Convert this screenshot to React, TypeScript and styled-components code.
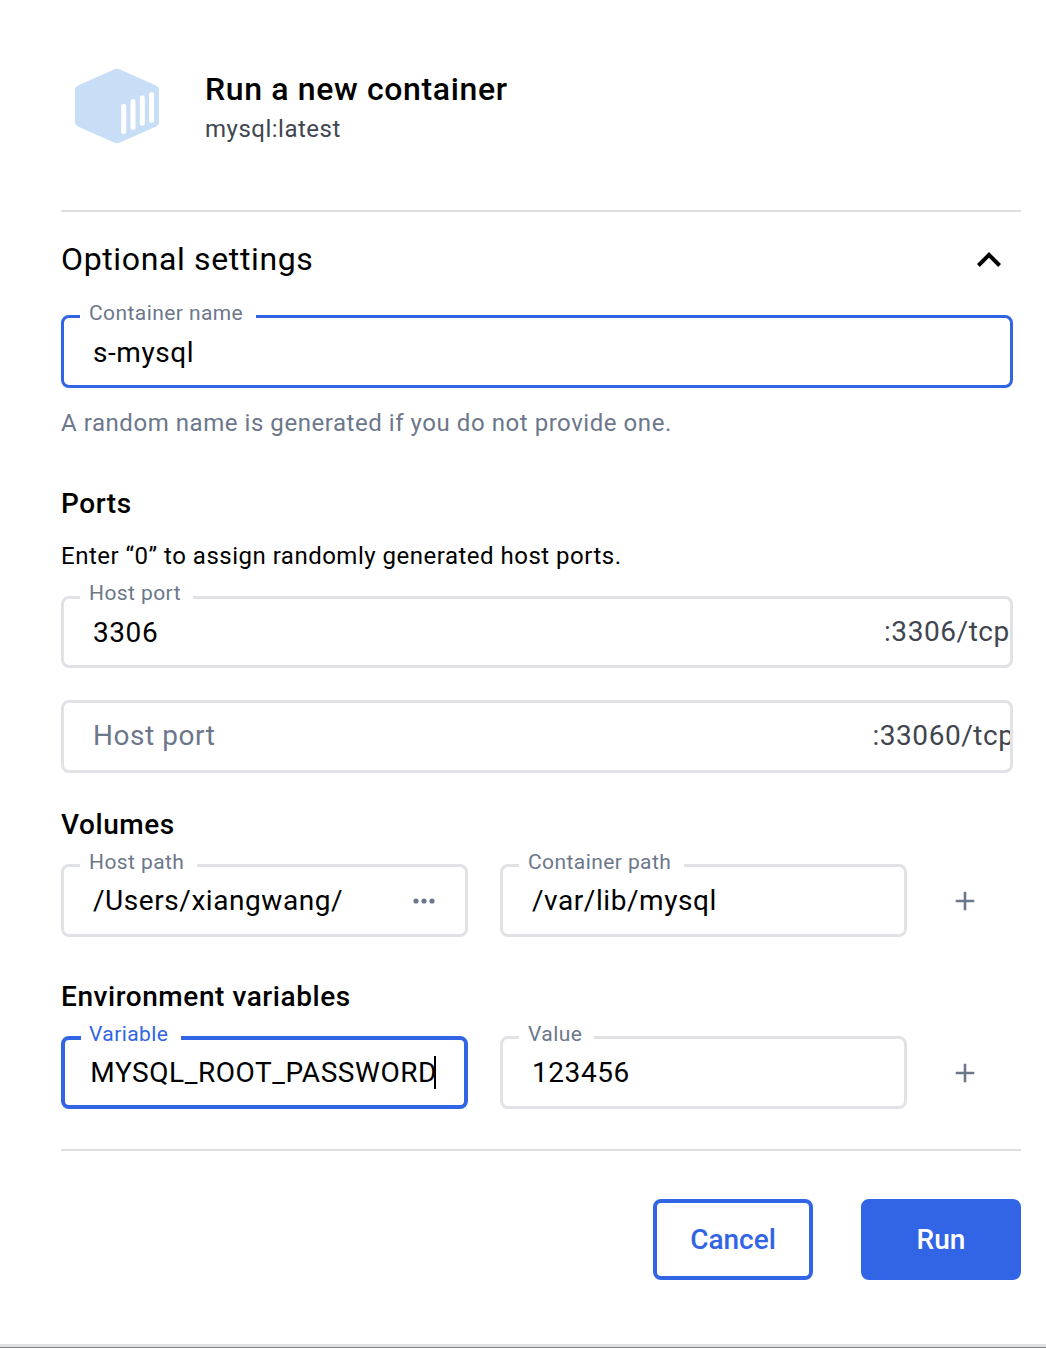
import React from "react";
import styled, { createGlobalStyle } from "styled-components";

const blue = "#3264e6";
const slate = "#6c778b";
const ink = "#404650";
const line = "#e1e2e6";

const GlobalStyle = createGlobalStyle`
  * { box-sizing: border-box; }
  body { margin: 0; background: #fff; }
  h1, h2, h3, p { margin: 0; font-weight: 400; }
`;

const Dialog = styled.main`
  display: flex;
  flex-direction: column;
  height: 1348px;
  padding: 64px 25px 0 61px;
  overflow: hidden;
  position: relative;
  font-family: Roboto, "Liberation Sans", sans-serif;
  color: #000;
`;

const Header = styled.header`
  display: flex;
  height: 146px;
  gap: 46px;
  padding-left: 14px;
`;

const ContainerIcon = styled.svg`
  width: 84px;
  height: 76px;
  margin-top: 4px;
`;

const Title = styled.h1`
  font-size: 32px;
  line-height: 50px;
  font-weight: 500;
  letter-spacing: 0.64px;
`;

const Subtitle = styled.p`
  font-size: 24px;
  line-height: 30px;
  letter-spacing: 0.5px;
  color: ${ink};
`;

const Divider = styled.hr<{ $top?: number }>`
  width: 100%;
  height: 2px;
  margin: ${(p) => p.$top ?? 0}px 0 0;
  border: 0;
  flex: none;
  background: #dfdfdf;
`;

const SettingsToggle = styled.div`
  display: flex;
  align-items: center;
  justify-content: space-between;
  height: 103px;
  padding: 0 20px 8px 0;
`;

const ToggleTitle = styled.h2`
  font-size: 32px;
  line-height: 44px;
  letter-spacing: 0.64px;
  padding-bottom: 2px;
`;

const Chevron = styled.svg`
  width: 24px;
  height: 16px;
`;

const Field = styled.div<{ $focus?: number; $h?: number }>`
  position: relative;
  display: flex;
  align-items: center;
  justify-content: space-between;
  flex: none;
  width: 100%;
  height: ${(p) => p.$h ?? 73}px;
  border: ${(p) => p.$focus ?? 3}px solid ${(p) => (p.$focus ? blue : line)};
  border-radius: 8px;
  padding-left: ${(p) => 32 - (p.$focus ?? 3)}px;
`;

const FieldLabel = styled.label<{ $active?: boolean; $w: number; $top?: number }>`
  position: absolute;
  top: ${(p) => p.$top ?? -20}px;
  left: 16px;
  width: ${(p) => p.$w}px;
  padding-left: ${(p) => (p.$active ? 8 : 9)}px;
  background: #fff;
  font-size: 21px;
  line-height: 30px;
  letter-spacing: 0.42px;
  white-space: nowrap;
  color: ${(p) => (p.$active ? blue : slate)};
`;

const Value = styled.span<{ $muted?: boolean; $drop?: number; $lift?: number }>`
  font-size: 28px;
  line-height: 40px;
  letter-spacing: 0.56px;
  white-space: nowrap;
  padding-top: ${(p) => p.$drop ?? 0}px;
  padding-bottom: ${(p) => p.$lift ?? 0}px;
  color: ${(p) => (p.$muted ? slate : "#000")};
`;

const PortSuffix = styled.span<{ $w: number; $lift?: number }>`
  width: ${(p) => p.$w}px;
  flex: none;
  overflow: hidden;
  padding-bottom: ${(p) => p.$lift ?? 0}px;
  font-size: 28px;
  line-height: 40px;
  letter-spacing: 0.56px;
  white-space: nowrap;
  color: ${ink};
`;

const Helper = styled.p`
  margin-top: 20px;
  font-size: 24px;
  line-height: 30px;
  letter-spacing: 0.55px;
  color: ${slate};
`;

const SectionTitle = styled.h3<{ $top: number; $gap: number }>`
  margin-top: ${(p) => p.$top}px;
  margin-bottom: ${(p) => p.$gap}px;
  font-size: 28px;
  line-height: 36px;
  font-weight: 500;
  letter-spacing: 0.56px;
`;

const Hint = styled.p`
  margin-bottom: 25px;
  font-size: 24px;
  line-height: 30px;
  letter-spacing: 0.5px;
`;

const Stack = styled.div`
  display: flex;
  flex-direction: column;
  gap: 32px;
  padding-right: 8px;
`;

const PairRow = styled.div`
  display: grid;
  grid-template-columns: 407px 407px 20px;
  column-gap: 32px;
  align-items: center;
`;

const AddIcon = styled.svg`
  width: 20px;
  height: 20px;
  margin-left: 16px;
`;

const More = styled.svg`
  width: 22px;
  height: 6px;
  margin-right: 30px;
`;

const Clip = styled.div`
  display: flex;
  justify-content: flex-end;
  width: 345px;
  margin-left: -1px;
  overflow: hidden;
`;

const Caret = styled.i`
  position: absolute;
  left: 369px;
  top: 16px;
  width: 2px;
  height: 33px;
  background: #000;
`;

const Actions = styled.footer`
  display: flex;
  justify-content: flex-end;
  gap: 48px;
  padding-top: 48px;
`;

const Button = styled.button<{ $primary?: boolean }>`
  width: 160px;
  height: 81px;
  padding: 0;
  border: 4px solid ${blue};
  border-radius: 8px;
  background: ${(p) => (p.$primary ? blue : "#fff")};
  color: ${(p) => (p.$primary ? "#fff" : blue)};
  font: 500 28px/40px Roboto, "Liberation Sans", sans-serif;
`;

const BottomEdge = styled.div`
  flex: none;
  height: 4px;
  margin: auto -25px 0 -61px;
  background: #dfe1e6;
  border-bottom: 1px solid #7d807f;
`;

const Add = () => (
  <AddIcon viewBox="0 0 20 20" stroke={slate} strokeWidth="2.6">
    <path d="M10 .7v18.6M.7 10h18.6" />
  </AddIcon>
);

export default function App() {
  return (
    <>
      <GlobalStyle />
      <Dialog>
        <Header>
          <ContainerIcon viewBox="0 0 84 76">
            <path
              fill="#c7def6"
              d="M39 1.6Q42 .1 45 1.6L80.5 17.2Q84 18.8 84 22V54Q84 57.2 80.5 58.8L45 74.5Q42 76 39 74.5L3.5 58.8Q0 57.2 0 54V22Q0 18.8 3.5 17.2Z"
            />
            <path
              stroke="#fff"
              strokeWidth="5"
              strokeLinecap="round"
              d="M48.7 38.2V63.6M58 33.5V59.4M67.3 29.7V55.3M76.5 26.5V52.2"
            />
          </ContainerIcon>
          <div>
            <Title>Run a new container</Title>
            <Subtitle>mysql:latest</Subtitle>
          </div>
        </Header>
        <Divider />
        <SettingsToggle>
          <ToggleTitle>Optional settings</ToggleTitle>
          <Chevron viewBox="0 0 24 16" fill="none" stroke="#000" strokeWidth="4">
            <path d="M1.4 13.5 12 2.9l10.6 10.6" />
          </Chevron>
        </SettingsToggle>
        <Stack>
          <Field $focus={3}>
            <FieldLabel $w={176}>Container name</FieldLabel>
            <Value $drop={2}>s-mysql</Value>
          </Field>
        </Stack>
        <Helper>A random name is generated if you do not provide one.</Helper>
        <SectionTitle $top={48} $gap={19}>Ports</SectionTitle>
        <Hint>Enter “0” to assign randomly generated host ports.</Hint>
        <Stack>
          <Field $h={72}>
            <FieldLabel $w={113} $top={-21}>Host port</FieldLabel>
            <Value $drop={2}>3306</Value>
            <PortSuffix $w={126}>:3306/tcp</PortSuffix>
          </Field>
          <Field>
            <Value $muted $lift={1}>Host port</Value>
            <PortSuffix $w={137.6} $lift={1}>:33060/tcp</PortSuffix>
          </Field>
        </Stack>
        <SectionTitle $top={34} $gap={21}>Volumes</SectionTitle>
        <PairRow>
          <Field>
            <FieldLabel $w={117}>Host path</FieldLabel>
            <Value>/Users/xiangwang/</Value>
            <More viewBox="0 0 22 6" fill={slate}>
              <circle cx="3" cy="3" r="2.6" />
              <circle cx="11" cy="3" r="2.6" />
              <circle cx="19" cy="3" r="2.6" />
            </More>
          </Field>
          <Field>
            <FieldLabel $w={165}>Container path</FieldLabel>
            <Value>/var/lib/mysql</Value>
          </Field>
          <Add />
        </PairRow>
        <SectionTitle $top={42} $gap={21}>Environment variables</SectionTitle>
        <PairRow>
          <Field $focus={4}>
            <FieldLabel $active $w={100} $top={-21}>Variable</FieldLabel>
            <Clip>
              <Value>MYSQL_ROOT_PASSWORD</Value>
            </Clip>
            <Caret />
          </Field>
          <Field>
            <FieldLabel $w={75}>Value</FieldLabel>
            <Value>123456</Value>
          </Field>
          <Add />
        </PairRow>
        <Divider $top={40} />
        <Actions>
          <Button>Cancel</Button>
          <Button $primary>Run</Button>
        </Actions>
        <BottomEdge />
      </Dialog>
    </>
  );
}
